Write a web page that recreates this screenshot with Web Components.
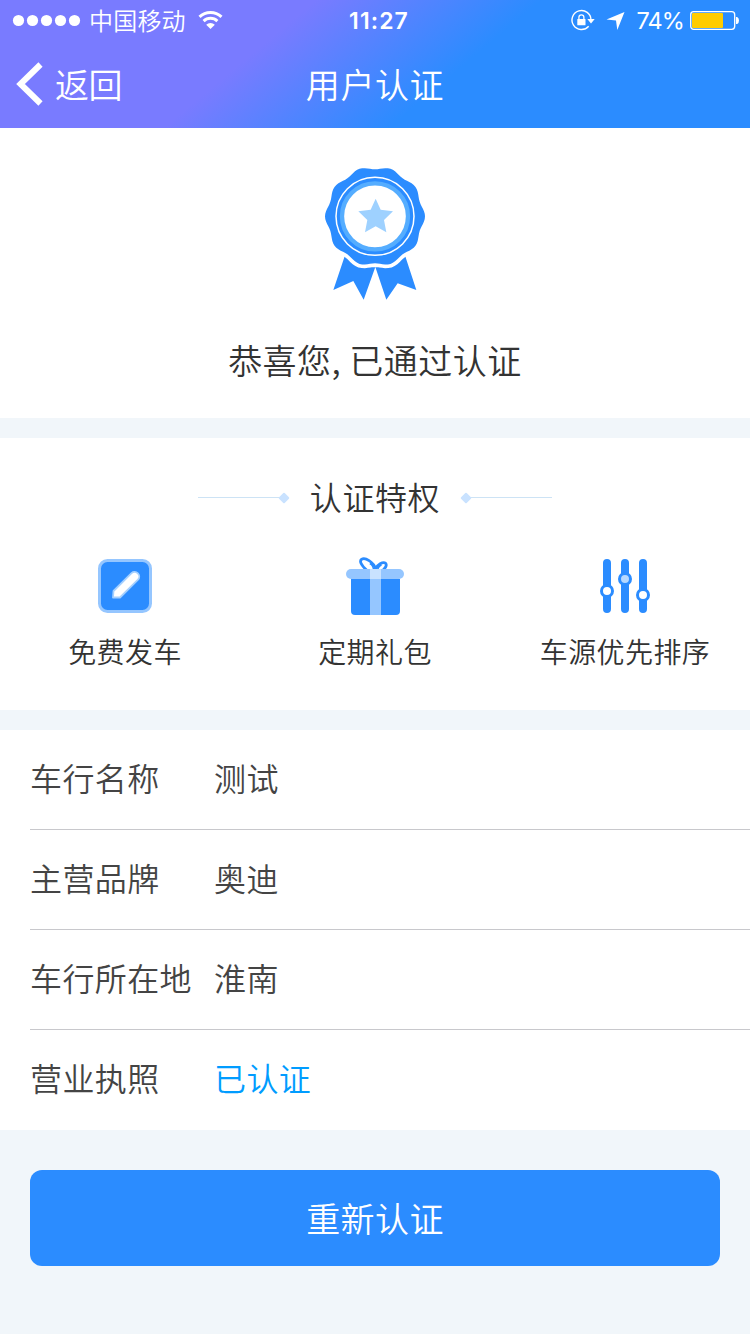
<!DOCTYPE html>
<html lang="zh-CN">
<head>
  <meta charset="UTF-8">
  <meta name="viewport" content="width=device-width, initial-scale=1.0">
  <title>用户认证</title>
  <style>
    body {
      margin: 0;
      background: #f1f6fa;
      color: #333;
      font-family: "Noto Sans CJK SC DemiLight", "Noto Sans CJK SC", sans-serif;
      font-weight: 350;
    }
  </style>
</head>
<body>
  <auth-page></auth-page>

  <template id="status-bar">
    <style>
      :host { display: flex; height: 40px; align-items: center; justify-content: space-between; font-size: 24px; line-height: 40px; }
      svg { display: block; }
      .left, .right { display: flex; align-items: center; flex: 1; }
      .left { padding-left: 12px; }
      .right { justify-content: flex-end; padding-right: 10px; }
      .carrier { margin: 0 12px 0 8px; letter-spacing: .2px; }
      .time { font: 600 23px/40px Inter, sans-serif; letter-spacing: 1.1px; margin: 2px 0 0 6px; }
      .power { font: 400 23.5px/40px Inter, sans-serif; margin: 2px 6px 0 12px; letter-spacing: -.9px; }
    </style>
    <div class="left">
      <svg width="69" height="40" fill="#fff">
        <circle cx="6.5" cy="20.5" r="5.6"/><circle cx="20.5" cy="20.5" r="5.6"/><circle cx="34.5" cy="20.5" r="5.6"/><circle cx="48.5" cy="20.5" r="5.6"/><circle cx="62.5" cy="20.5" r="5.6"/>
      </svg>
      <span class="carrier">中国移动</span>
      <svg width="26" height="40" fill="none" stroke="#fff" stroke-width="3">
        <path d="M1.5 16.8a16 16 0 0 1 22 0M5.6 21.1a10 10 0 0 1 13.8 0"/>
        <path d="M12.5 29l-4.3-4.2a6.2 6.2 0 0 1 8.6 0z" fill="#fff" stroke="none"/>
      </svg>
    </div>
    <span class="time">11:27</span>
    <div class="right">
      <svg width="55" height="40" fill="#fff">
        <path d="M19 20a9.5 9.5 0 1 0-2.3 6.2" transform="translate(2)" fill="none" stroke="#fff" stroke-width="1.4"/>
        <path d="M17.3 19h7.4L21 23.4z"/>
        <rect x="7.3" y="19" width="8.2" height="6.3" rx=".6"/>
        <path d="M8.9 19.500v-2.200a2.500 2.500 0 0 1 5 0v2.200" fill="none" stroke="#fff" stroke-width="1.300"/>
        <path d="M36.500 19.500L54.500 12 47.300 30 46 20.500z"/>
      </svg>
      <span class="power">74%</span>
      <svg width="50" height="40">
        <rect x=".7" y="11.700" width="44" height="17.600" rx="3" fill="none" stroke="#fff" stroke-width="1.300"/>
        <rect x="2" y="13" width="31" height="15" rx="1" fill="#fc0"/>
        <path d="M46 17h1.200q1.800 1 1.800 3.500t-1.800 3.500H46z" fill="#fff"/>
      </svg>
    </div>
  </template>

  <template id="nav-bar">
    <style>
      :host { display: flex; height: 88px; align-items: center; font-size: 34px; line-height: 88px; }
      .back { display: flex; flex: 1; align-items: center; letter-spacing: -.4px; }
      .back svg { margin: 0 12px 0 15px; }
      .title { letter-spacing: .6px; }
      .end { flex: 1; }
    </style>
    <div class="back">
      <svg width="28" height="44" fill="none" stroke="#fff" stroke-width="6"><path d="M25.500 2.500L5.500 22 25.500 41.500"/></svg>
      <span><slot name="back"></slot></span>
    </div>
    <span class="title"><slot></slot></span>
    <div class="end"></div>
  </template>

  <template id="auth-medal">
    <style>
      :host { display: block; width: 130px; height: 155px; }
    </style>
    <svg width="130" height="155" viewBox="0 0 390 465">
      <path fill="#2b8cff" d="M108 292L70 405l60-27 31 56 35-98 33 98 34-49 56 20-37-113z"/>
      <path class="edge" fill="#2b8cff" stroke="#fff" stroke-width="22" paint-order="stroke"/>
      <circle cx="195" cy="184" r="117" fill="none" stroke="#fff" stroke-width="4.500"/>
      <circle cx="195" cy="184" r="99" fill="#fff" stroke="#55adff" stroke-width="13"/>
      <path fill="#9ed1ff" d="M197 131l15 33 37 5-27 26 7 37-32-18-32 18 7-37-27-26 37-5z"/>
    </svg>
  </template>

  <template id="section-title">
    <style>
      :host { display: flex; align-items: center; justify-content: center; font-size: 32px; line-height: 48px; letter-spacing: .6px; }
      span { margin: -3px 22px 0; }
      i { width: 88px; height: 1px; background: #cde3f5; }
      b { width: 8px; height: 8px; border-radius: 1px; background: #c9e2ff; transform: rotate(45deg); }
      b:first-of-type { margin-left: -6px; }
      b:last-of-type { margin-right: -6px; }
    </style>
    <i></i><b></b><span><slot></slot></span><b></b><i></i>
  </template>

  <template id="privilege-item">
    <style>
      :host { display: flex; flex: 1; flex-direction: column; align-items: center; font-size: 28px; line-height: 40px; letter-spacing: .4px; }
      ::slotted(svg) { display: block; width: 60px; height: 60px; margin-bottom: 14px; }
    </style>
    <slot name="icon"></slot>
    <span><slot></slot></span>
  </template>

  <template id="info-row">
    <style>
      :host { display: flex; box-sizing: border-box; height: 100px; margin-left: 30px; border-bottom: 1px solid #c8c8cc; color: #444; font-size: 32px; line-height: 95px; letter-spacing: .4px; }
      :host(:last-of-type) { border-bottom: 0; }
      .label { width: 184px; }
      .value { color: var(--value-color, inherit); }
    </style>
    <span class="label"><slot name="label"></slot></span>
    <span class="value"><slot></slot></span>
  </template>

  <template id="main-button">
    <style>
      :host { display: block; }
      button { display: block; width: 100%; height: 96px; padding: 0; border: 0; border-radius: 12px; background: #2b8cff; color: #fff; font: inherit; font-size: 34px; line-height: 96px; letter-spacing: .4px; }
    </style>
    <button><slot></slot></button>
  </template>

  <template id="auth-page">
    <style>
      :host { display: flex; flex-direction: column; gap: 20px; height: 1334px; overflow: hidden; }
      header { color: #fff; background: linear-gradient(140deg, #797bff 35%, #2b8cff 60%); }
      .top { display: flex; flex-direction: column; }
      section { background: #fff; }
      .result { display: flex; flex-direction: column; align-items: center; height: 290px; }
      .result auth-medal { margin-top: 27px; }
      .result p { margin: 25px 0 0; font-size: 34px; line-height: 50px; letter-spacing: .5px; }
      .privileges { height: 272px; }
      .privileges section-title { padding-top: 37px; }
      .list { display: flex; margin-top: 37px; }
      main-button { margin: 20px 30px 0; }
    </style>
    <div class="top">
      <header>
        <status-bar></status-bar>
        <nav-bar><span slot="back">返回</span>用户认证</nav-bar>
      </header>
      <section class="result">
        <auth-medal></auth-medal>
        <p>恭喜您, 已通过认证</p>
      </section>
    </div>
    <section class="privileges">
      <section-title>认证特权</section-title>
      <div class="list">
        <privilege-item>
          <svg slot="icon" viewBox="0 0 60 60">
            <rect x="4.500" y="3.500" width="51" height="51" rx="8" fill="#2b8cff" stroke="#95c6ff" stroke-width="3"/>
            <path d="M18 40.500l.5-6.500L36.500 16.200a4.600 4.600 0 0 1 6.500 6.500L25 40.500z" fill="#fff" stroke="#a5d0ff" stroke-width="1.800" stroke-linejoin="round"/>
          </svg>
          免费发车
        </privilege-item>
        <privilege-item>
          <svg slot="icon" viewBox="0 0 60 60">
            <path d="M21.500 13C15.500 7.500 14.500 4 16.500 2.400c3.500-2.500 12 2.500 14.200 9.600C32 7.500 38 4.500 40.500 6.200c2 2-.5 5.500-3.500 7.800" fill="none" stroke="#2b8cff" stroke-width="2.800"/>
            <path d="M28.500 13.500q.2-5-3.700-7M32.500 13.500q.5-4 4-5.500" fill="none" stroke="#2b8cff" stroke-width="1.500"/>
            <path d="M6 22h49v32a4 4 0 0 1-4 4H10a4 4 0 0 1-4-4z" fill="#2b8cff"/>
            <rect x="1" y="12" width="58" height="10" rx="5" fill="#95c6ff"/>
            <path d="M25 22h11v36H25z" fill="#95c6ff"/>
            <path d="M25 12h11v10H25z" fill="#c9e2ff"/>
          </svg>
          定期礼包
        </privilege-item>
        <privilege-item>
          <svg slot="icon" viewBox="0 0 60 60" stroke="#2b8cff">
            <path d="M12 6v46M30 6v46M48 6v46" stroke-width="8" stroke-linecap="round"/>
            <circle cx="12" cy="34" r="5.500" fill="#fff" stroke-width="3"/>
            <circle cx="30" cy="22" r="5.500" fill="#b5d8ff" stroke-width="3"/>
            <circle cx="48" cy="38" r="5.500" fill="#fff" stroke-width="3"/>
          </svg>
          车源优先排序
        </privilege-item>
      </div>
    </section>
    <section>
      <info-row><span slot="label">车行名称</span>测试</info-row>
      <info-row><span slot="label">主营品牌</span>奥迪</info-row>
      <info-row><span slot="label">车行所在地</span>淮南</info-row>
      <info-row style="--value-color: #009cff"><span slot="label">营业执照</span>已认证</info-row>
    </section>
    <main-button>重新认证</main-button>
  </template>

  <script>
    class TemplateElement extends HTMLElement {
      constructor() {
        super();
        const t = document.getElementById(this.localName);
        this.attachShadow({ mode: 'open' }).appendChild(t.content.cloneNode(true));
      }
    }

    class AuthMedal extends TemplateElement {
      constructor() {
        super();
        // wavy edge with ten bumps
        const points = [];
        for (let deg = 0; deg < 360; deg += 3) {
          const a = deg * Math.PI / 180;
          const r = 145.5 + 4.5 * Math.cos(10 * a);
          points.push((195 + r * Math.cos(a)).toFixed(1) + ' ' + (184 + r * Math.sin(a)).toFixed(1));
        }
        this.shadowRoot.querySelector('.edge').setAttribute('d', 'M' + points.join('L') + 'z');
      }
    }

    customElements.define('status-bar', class extends TemplateElement {});
    customElements.define('nav-bar', class extends TemplateElement {});
    customElements.define('auth-medal', AuthMedal);
    customElements.define('section-title', class extends TemplateElement {});
    customElements.define('privilege-item', class extends TemplateElement {});
    customElements.define('info-row', class extends TemplateElement {});
    customElements.define('main-button', class extends TemplateElement {});
    customElements.define('auth-page', class extends TemplateElement {});
  </script>
</body>
</html>
